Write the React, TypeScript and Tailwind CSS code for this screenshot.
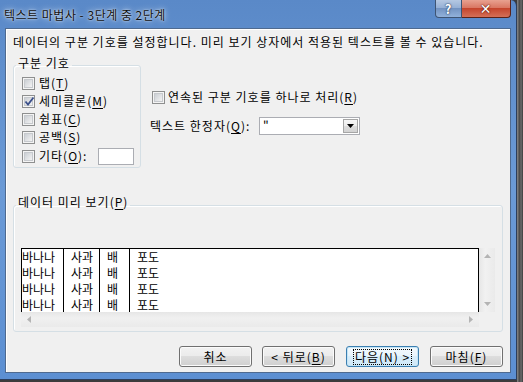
const font = "font-['Noto_Sans_CJK_KR','Noto_Sans',sans-serif]";

const rows = [
  ["바나나", "사과", "배", "포도"],
  ["바나나", "사과", "배", "포도"],
  ["바나나", "사과", "배", "포도"],
  ["바나나", "사과", "배", "포도"],
];

function Mn({ c }: { c: string }) {
  return <span className="underline underline-offset-[2px]">{c}</span>;
}

function CheckBox({ checked }: { checked?: boolean }) {
  return (
    <span className="flex h-[13px] w-[13px] shrink-0 items-center justify-center border border-[#8e8f8f] bg-[#f4f4f4]">
      <span className="relative h-[9px] w-[9px] border border-[#c6c9cd] bg-[linear-gradient(135deg,#cbcfd4,#f3f3f3)]">
        {checked && (
          <svg className="absolute -left-[1px] -top-[2px]" width="11" height="11" viewBox="0 0 11 11">
            <path d="M1.5 5.5 L4 8.5 L9.5 1.5" fill="none" stroke="#3a4f8a" strokeWidth="1.8" />
          </svg>
        )}
      </span>
    </span>
  );
}

function Btn({ children, def }: { children: React.ReactNode; def?: boolean }) {
  return (
    <button
      type="button"
      className={
        def
          ? "flex h-[21px] w-[73px] items-center justify-center rounded-[3px] border border-[#3c7fb1] bg-[linear-gradient(#f4fafe_0%,#e8f4fc_50%,#d9eefb_50%,#cfe8f8_100%)] text-[12px] leading-[14px] tracking-[1px] text-black shadow-[inset_0_0_0_1px_#c4e5f6]"
          : "flex h-[21px] w-[73px] items-center justify-center rounded-[3px] border border-[#707070] bg-[linear-gradient(#f2f2f2_0%,#ebebeb_50%,#dddddd_50%,#cfcfcf_100%)] text-[12px] leading-[14px] tracking-[1px] text-black shadow-[inset_0_0_0_1px_#fbfbfb]"
      }
    >
      {def ? (
        <span className="border border-dotted border-black px-[1px]">{children}</span>
      ) : (
        children
      )}
    </button>
  );
}

function Tri({ dir }: { dir: "up" | "down" | "left" | "right" }) {
  const d = {
    up: "M0 4 L3.5 0 L7 4 Z",
    down: "M0 0 L3.5 4 L7 0 Z",
    left: "M4 0 L0 3.5 L4 7 Z",
    right: "M0 0 L4 3.5 L0 7 Z",
  }[dir];
  const vertical = dir === "up" || dir === "down";
  return (
    <svg width={vertical ? 7 : 4} height={vertical ? 4 : 7} viewBox={vertical ? "0 0 7 4" : "0 0 4 7"}>
      <path d={d} fill="#b4b4b4" />
    </svg>
  );
}

export default function App() {
  return (
    <div className={`flex h-[382px] w-[523px] overflow-hidden bg-[#3c3c3c] text-[12px] tracking-[1px] text-black ${font}`}>
      {/* window */}
      <div className="flex h-[380px] w-[517px] shrink-0 flex-col rounded-tr-[6px] border-b border-r border-[#2c3e5c] bg-[linear-gradient(180deg,#5a89c8,#6b9ad6_50%,#5c8fd2)] px-[5px]">
        {/* title bar */}
        <div className="flex h-[28px] shrink-0 items-start justify-between">
          <div className="-ml-[1px] pt-[7px] leading-[16px] tracking-[0.5px] text-[#111] [text-shadow:0_0_6px_rgba(255,255,255,0.9),0_0_2px_rgba(255,255,255,0.8)]">
            텍스트 마법사 - 3단계 중 2단계
          </div>
          <div className="flex">
            <div className="flex h-[18px] w-[27px] items-center justify-center rounded-bl-[4px] border border-t-0 border-[#3e5473] bg-[linear-gradient(#b5c8e2_0%,#93aed4_50%,#7393c1_50%,#91b1db_100%)] text-[13px] font-bold leading-none text-white [text-shadow:0_0_2px_#233a5c,0_0_1px_#233a5c]">
              ?
            </div>
            <div className="flex h-[18px] w-[49px] items-center justify-center rounded-br-[4px] border border-l-0 border-t-0 border-[#5a2218] bg-[linear-gradient(#e8a190_0%,#d8735e_50%,#c5452d_50%,#d47058_100%)] text-[14px] font-bold leading-none text-white [text-shadow:0_0_2px_#5c1408,0_0_1px_#5c1408]">
              <span className="font-['DejaVu_Sans',sans-serif]">✕</span>
            </div>
          </div>
        </div>

        {/* client area */}
        <div className="flex h-[345px] shrink-0 flex-col border border-[#4f6a8f] bg-[#f0f0f0] shadow-[inset_1px_1px_0_#ffffff]">
          <div className="ml-[7px] mt-[5px] leading-[16px]">
            데이터의 구분 기호를 설정합니다. 미리 보기 상자에서 적용된 텍스트를 볼 수 있습니다.
          </div>

          <div className="ml-[7px] mt-[6px] flex">
            <fieldset className="w-[128px] rounded-[3px] border border-[#d5dfe5] pb-[1px] shadow-[inset_1px_1px_0_#ffffff]">
              <legend className="ml-[2px] px-[2px] pb-[4px] leading-[14px]">구분 기호</legend>
              <div className="pl-[8px]">
                <div className="flex h-[18px] items-center gap-[4px]">
                  <CheckBox />
                  <span className="leading-[14px]">탭(<Mn c="T" />)</span>
                </div>
                <div className="flex h-[18px] items-center gap-[4px]">
                  <CheckBox checked />
                  <span className="leading-[14px]">세미콜론(<Mn c="M" />)</span>
                </div>
                <div className="flex h-[18px] items-center gap-[4px]">
                  <CheckBox />
                  <span className="leading-[14px]">쉼표(<Mn c="C" />)</span>
                </div>
                <div className="flex h-[18px] items-center gap-[4px]">
                  <CheckBox />
                  <span className="leading-[14px]">공백(<Mn c="S" />)</span>
                </div>
                <div className="flex h-[20px] items-center gap-[4px]">
                  <CheckBox />
                  <span className="w-[55px] leading-[14px]">기타(<Mn c="O" />):</span>
                  <span className="h-[17px] w-[36px] border border-[#abadb3] bg-white" />
                </div>
              </div>
            </fieldset>

            <div className="ml-[9px] flex flex-col pt-[32px]">
              <div className="ml-[2px] flex h-[18px] items-center gap-[3px]">
                <CheckBox />
                <span className="leading-[14px]">연속된 구분 기호를 하나로 처리(<Mn c="R" />)</span>
              </div>
              <div className="mt-[11px] flex h-[18px] items-center">
                <span className="w-[109px] leading-[14px]">텍스트 한정자(<Mn c="Q" />):</span>
                <div className="flex h-[18px] w-[101px] items-stretch border border-[#abadb3] bg-white">
                  <span className="flex-1 pl-[3px] leading-[14px]">"</span>
                  <span className="m-[1px] flex w-[15px] items-center justify-center border border-[#a6a6a6] bg-[linear-gradient(#f6f6f6_0%,#ececec_50%,#dedede_50%,#d2d2d2_100%)]">
                    <svg width="7" height="4" viewBox="0 0 7 4">
                      <path d="M0 0 L3.5 4 L7 0 Z" fill="#000" />
                    </svg>
                  </span>
                </div>
              </div>
            </div>
          </div>

          <fieldset className="ml-[7px] mt-[27px] w-[490px] rounded-[3px] border border-[#d5dfe5] pb-[4px] shadow-[inset_1px_1px_0_#ffffff]">
            <legend className="ml-[2px] px-[2px] pb-[6px] leading-[14px]">
              데이터 미리 보기(<Mn c="P" />)
            </legend>
            <div className="mt-[33px] flex pl-[7px] tracking-normal">
              <div className="flex w-[458px] flex-col">
                <div className="h-[64px] overflow-hidden border-l border-r border-t border-black bg-white">
                  {rows.map((r, i) => (
                    <div key={i} className="flex h-[16px] items-center leading-[16px]">
                      <span className="w-[41px]">{r[0]}</span>
                      <span className="h-[16px] w-[36px] border-l border-black pl-[7px]">{r[1]}</span>
                      <span className="h-[16px] w-[30px] border-l border-black pl-[7px]">{r[2]}</span>
                      <span className="h-[16px] border-l border-black pl-[7px]">{r[3]}</span>
                    </div>
                  ))}
                </div>
                <div className="flex h-[15px] items-center justify-between bg-[linear-gradient(#e6e6e6,#f0f0f0_40%,#eaeaea)] px-[6px]">
                  <Tri dir="left" />
                  <Tri dir="right" />
                </div>
              </div>
              <div className="flex h-[64px] w-[16px] flex-col items-center justify-between bg-[linear-gradient(90deg,#e6e6e6,#f1f1f1_40%,#eaeaea)] py-[6px]">
                <Tri dir="up" />
                <Tri dir="down" />
              </div>
            </div>
          </fieldset>

          <div className="mt-[14px] flex justify-end pr-[7px]">
            <Btn>취소</Btn>
            <div className="ml-[10px]">
              <Btn>
                &lt; 뒤로(<Mn c="B" />)
              </Btn>
            </div>
            <div className="ml-[11px]">
              <Btn def>다음(N) &gt;</Btn>
            </div>
            <div className="ml-[11px]">
              <Btn>
                마침(<Mn c="F" />)
              </Btn>
            </div>
          </div>
        </div>
      </div>
      <div className="h-full flex-1 bg-[linear-gradient(90deg,#8a8a8a,#4a4a4a_40%,#6a6a6a_70%,#3a3a3a)]" />
    </div>
  );
}
